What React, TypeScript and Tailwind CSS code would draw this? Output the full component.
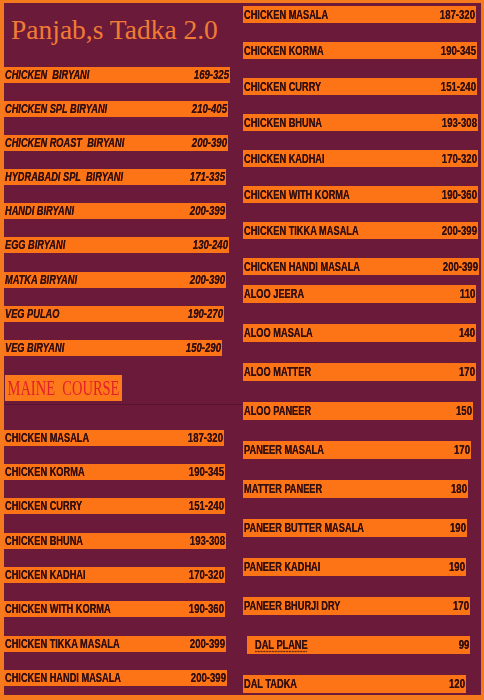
import React from "react";

type Item = { name: string; price: string; w: string };

const biryani: Item[] = [
  { name: "CHICKEN  BIRYANI", price: "169-325", w: "w-[226px]" },
  { name: "CHICKEN SPL BIRYANI", price: "210-405", w: "w-[224px]" },
  { name: "CHICKEN ROAST  BIRYANI", price: "200-390", w: "w-[224px]" },
  { name: "HYDRABADI SPL  BIRYANI", price: "171-335", w: "w-[222px]" },
  { name: "HANDI BIRYANI", price: "200-399", w: "w-[222px]" },
  { name: "EGG BIRYANI", price: "130-240", w: "w-[225px]" },
  { name: "MATKA BIRYANI", price: "200-390", w: "w-[222px]" },
  { name: "VEG PULAO", price: "190-270", w: "w-[220px]" },
  { name: "VEG BIRYANI", price: "150-290", w: "w-[218px]" },
];

const chickenLeft: Item[] = [
  { name: "CHICKEN MASALA", price: "187-320", w: "w-[220px]" },
  { name: "CHICKEN KORMA", price: "190-345", w: "w-[221px]" },
  { name: "CHICKEN CURRY", price: "151-240", w: "w-[221px]" },
  { name: "CHICKEN BHUNA", price: "193-308", w: "w-[222px]" },
  { name: "CHICKEN KADHAI", price: "170-320", w: "w-[221px]" },
  { name: "CHICKEN WITH KORMA", price: "190-360", w: "w-[221px]" },
  { name: "CHICKEN TIKKA MASALA", price: "200-399", w: "w-[222px]" },
  { name: "CHICKEN HANDI MASALA", price: "200-399", w: "w-[223px]" },
];

const chickenRight: Item[] = [
  { name: "CHICKEN MASALA", price: "187-320", w: "w-[233px]" },
  { name: "CHICKEN KORMA", price: "190-345", w: "w-[234px]" },
  { name: "CHICKEN CURRY", price: "151-240", w: "w-[234px]" },
  { name: "CHICKEN BHUNA", price: "193-308", w: "w-[235px]" },
  { name: "CHICKEN KADHAI", price: "170-320", w: "w-[235px]" },
  { name: "CHICKEN WITH KORMA", price: "190-360", w: "w-[235px]" },
  { name: "CHICKEN TIKKA MASALA", price: "200-399", w: "w-[235px]" },
  { name: "CHICKEN HANDI MASALA", price: "200-399", w: "w-[236px]" },
];

const veg: Item[] = [
  { name: "ALOO JEERA", price: "110", w: "w-[233px]" },
  { name: "ALOO MASALA", price: "140", w: "w-[233px]" },
  { name: "ALOO MATTER", price: "170", w: "w-[233px]" },
  { name: "ALOO PANEER", price: "150", w: "w-[230px]" },
  { name: "PANEER MASALA", price: "170", w: "w-[228px]" },
  { name: "MATTER PANEER", price: "180", w: "w-[225px]" },
  { name: "PANEER BUTTER MASALA", price: "190", w: "w-[224px]" },
  { name: "PANEER KADHAI", price: "190", w: "w-[223px]" },
  { name: "PANEER BHURJI DRY", price: "170", w: "w-[227px]" },
  { name: "DAL PLANE", price: "99", w: "w-[223px]" },
  { name: "DAL TADKA", price: "120", w: "w-[223px]" },
];

const font = "font-['Liberation_Sans',Arial,sans-serif]";

function Bar({ item, h, italic }: { item: Item; h: string; italic?: boolean }) {
  const plane = item.name === "DAL PLANE";
  return (
    <div
      className={`${item.w} ${h} ${plane ? "ml-[4px]" : ""} flex items-center justify-between bg-[#fd7417] pl-[1px] pr-[1px] text-[12px] font-bold leading-none text-[#351010] ${font} ${italic ? "italic" : ""}`}
    >
      <span
        className={`origin-left scale-x-[0.77] whitespace-pre [text-shadow:0_0_0.5px_#351010] ${plane ? "ml-[7px] underline decoration-dotted decoration-[#7a2a10] underline-offset-2" : ""}`}
      >
        {item.name}
      </span>
      <span className="origin-right scale-x-[0.8] [text-shadow:0_0_0.5px_#351010]">{item.price}</span>
    </div>
  );
}

export default function App() {
  return (
    <div className="flex h-[700px] w-[484px] overflow-hidden bg-[#6c1a3a]">
      {/* Left column */}
      <div className="flex h-[700px] w-[242px] flex-col border-b-[5px] border-l-4 border-t-[3px] border-[#f57a1e]">
        <div className="ml-[7px] mt-[13px] h-[27px] whitespace-nowrap font-['Liberation_Serif',serif] text-[27.5px] leading-none text-[#f07c34]">
          Panjab,s Tadka 2.0
        </div>
        <div className="mt-[24px] flex flex-col gap-[18.1px]">
          {biryani.map((it) => (
            <Bar key={it.name} item={it} h="h-4" italic />
          ))}
        </div>
        <div className="ml-[1px] mt-[19px] flex h-[26px] w-[117px] items-center justify-center bg-[#fd7a1a]">
          <span className="origin-center scale-y-[1.45] whitespace-pre font-['Liberation_Serif',serif] text-[14.5px] leading-none text-[#e4202a]">
            MAINE  COURSE
          </span>
        </div>
        <div className="mt-[3px] h-px w-full bg-[#5a1230]" />
        <div className="mt-[25px] flex flex-col gap-[18.3px]">
          {chickenLeft.map((it) => (
            <Bar key={it.name} item={it} h="h-4" />
          ))}
        </div>
      </div>

      {/* Right column */}
      <div className="flex h-[700px] w-[242px] flex-col border-b-[5px] border-r-[3px] border-t-[3px] border-[#f57a1e]">
        <div className="ml-[1px] mt-[3px] flex flex-col gap-[19px]">
          {chickenRight.map((it) => (
            <Bar key={it.name + "r"} item={it} h="h-[17px]" />
          ))}
        </div>
        <div className="ml-[1px] mt-[10px] flex flex-col gap-[21px]">
          {veg.map((it) => (
            <Bar key={it.name} item={it} h="h-[18px]" />
          ))}
        </div>
      </div>
    </div>
  );
}
